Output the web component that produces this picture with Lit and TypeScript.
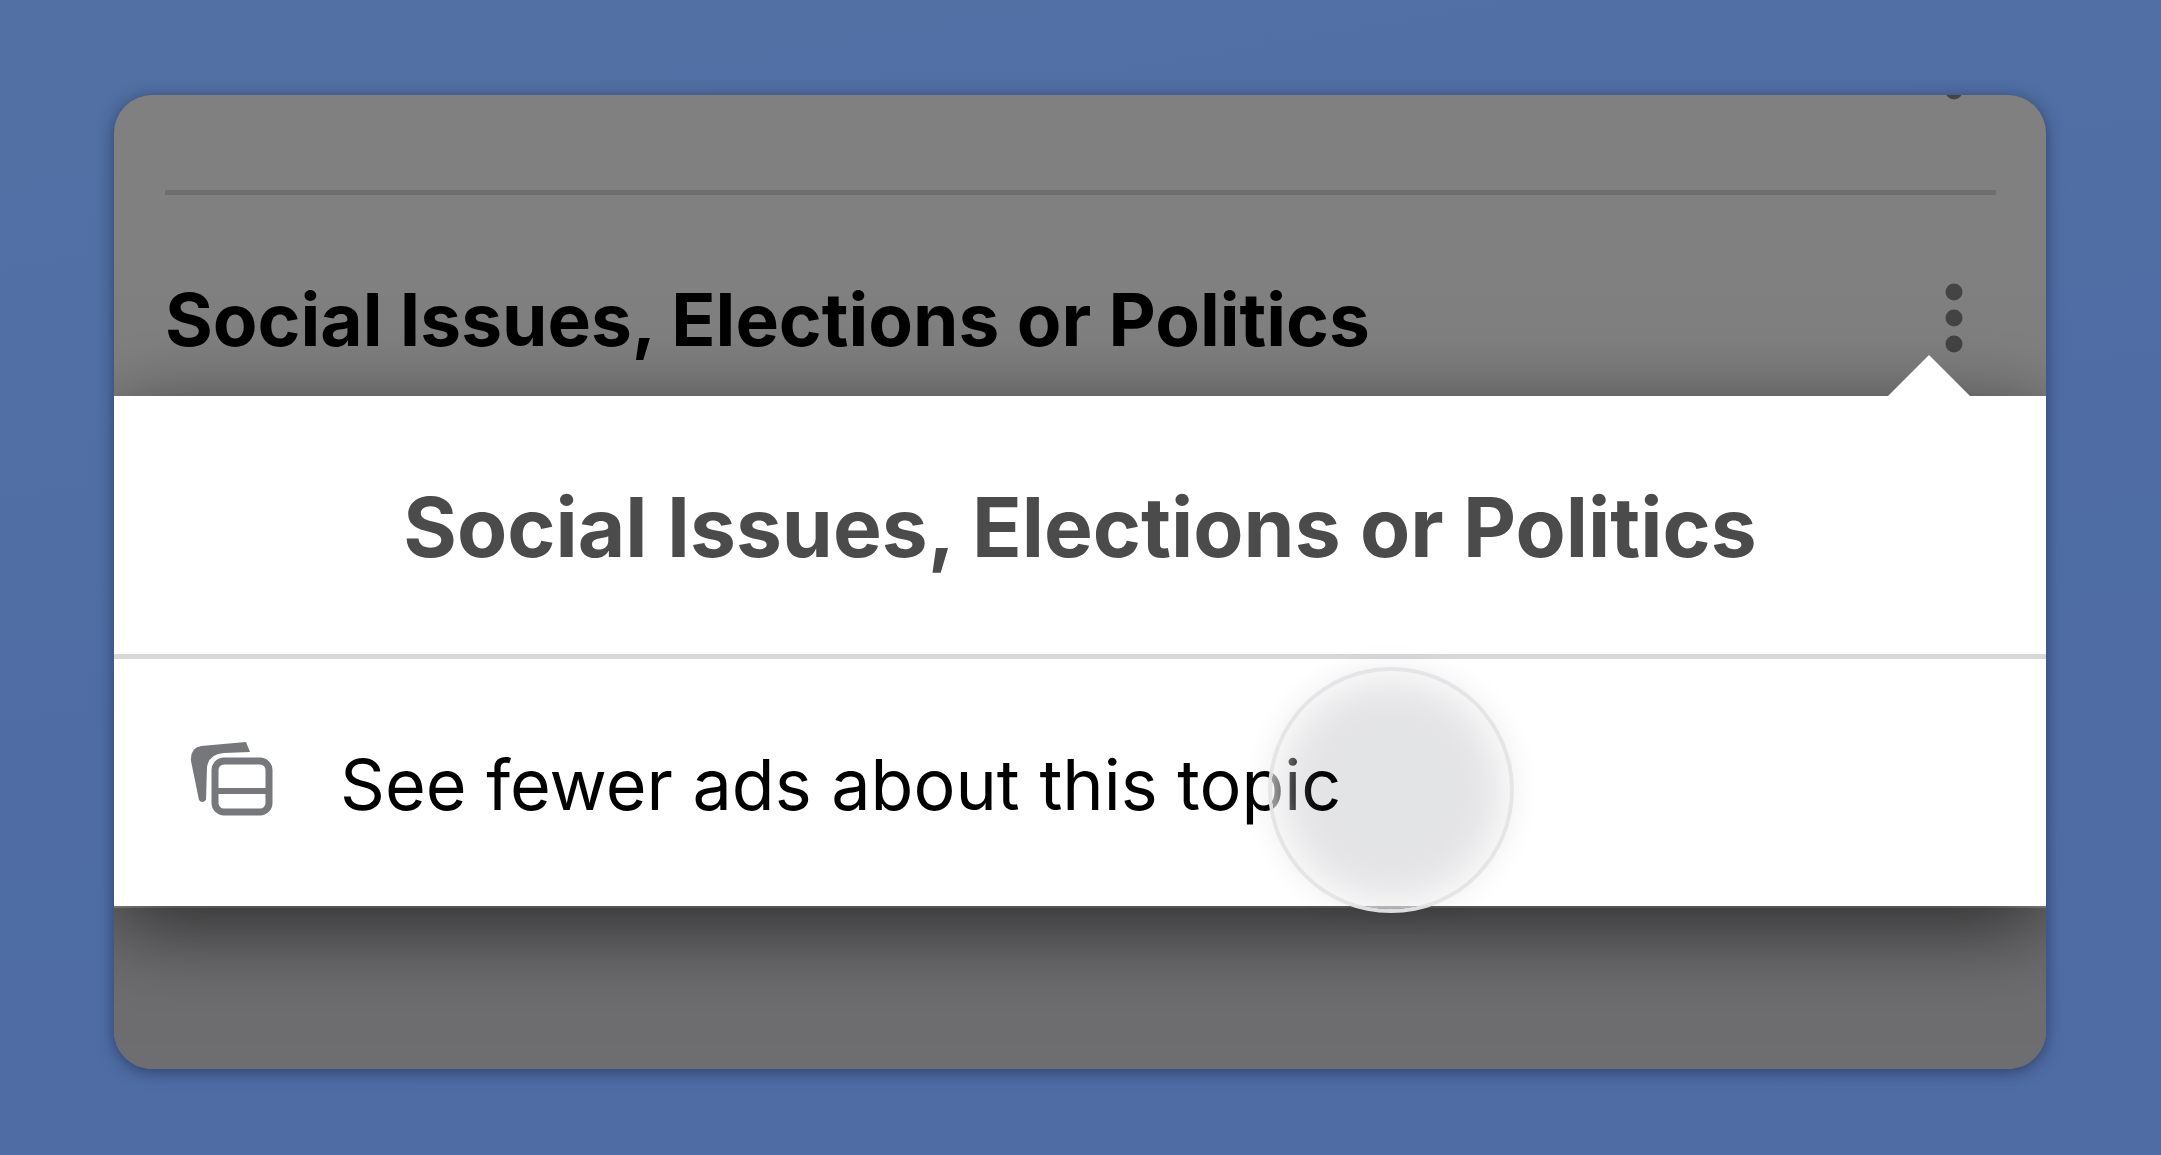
import { LitElement, html, css, svg } from "lit";
import { customElement, property } from "lit/decorators.js";

const dots = svg`
  <circle cx="9" cy="9" r="8.5"></circle>
  <circle cx="9" cy="35" r="8.5"></circle>
  <circle cx="9" cy="61" r="8.5"></circle>`;

@customElement("topic-row")
class TopicRow extends LitElement {
  @property() label = "";

  static styles = css`
    :host {
      display: flex;
      align-items: center;
      justify-content: space-between;
    }
    .title {
      margin: 0;
      padding-top: 4px;
      font-size: 73px;
      line-height: 84px;
      font-weight: 700;
      color: #000;
    }
    .more {
      display: block;
      padding: 0;
      border: 0;
      background: none;
      cursor: pointer;
    }
    .icon {
      display: block;
      width: 18px;
      height: 70px;
      fill: #444;
    }
  `;

  render() {
    return html`
      <h2 class="title">${this.label}</h2>
      <button class="more" type="button" aria-label="More options">
        <svg class="icon" viewBox="0 0 18 70" aria-hidden="true">${dots}</svg>
      </button>
    `;
  }
}

@customElement("topic-menu")
class TopicMenu extends LitElement {
  @property() label = "";

  static styles = css`
    :host {
      display: block;
      position: relative;
      z-index: 1;
      background: #fff;
      box-shadow: 0 20px 80px rgba(0, 0, 0, 0.62);
    }
    .arrow {
      position: absolute;
      right: 76px;
      bottom: 100%;
      width: 82px;
      height: 41px;
      background: #fff;
      clip-path: polygon(50% 0, 100% 100%, 0 100%);
    }
    .title {
      margin: 0;
      padding: 84px 0 78px;
      border-bottom: 5px solid #d8d8d8;
      text-align: center;
      font-size: 82px;
      line-height: 96px;
      font-weight: 700;
      color: #4b4b4b;
    }
    .item {
      display: flex;
      align-items: flex-start;
      gap: 66px;
      width: 100%;
      padding: 80px 76px 79px;
      border: 0;
      background: none;
      font: inherit;
      font-size: 70px;
      line-height: 84px;
      color: #000;
      text-align: left;
      cursor: pointer;
    }
    .icon {
      flex: none;
      width: 84px;
      height: 78px;
    }
    .label {
      position: relative;
      padding-top: 4px;
    }
    .touch {
      position: absolute;
      top: 50%;
      left: 100%;
      width: 246px;
      height: 246px;
      margin: -116px 0 0 -73px;
      box-sizing: border-box;
      border: 4px solid rgba(228, 228, 230, 0.96);
      border-radius: 50%;
      background: rgba(0, 8, 30, 0.11);
      background-clip: padding-box;
      box-shadow:
        inset 0 0 44px 5px #fff,
        0 0 30px rgba(0, 0, 0, 0.07);
      pointer-events: none;
    }
  `;

  render() {
    return html`
      <span class="arrow"></span>
      <h3 class="title">${this.label}</h3>
      <button class="item" type="button">
        <svg class="icon" viewBox="0 0 84 78" aria-hidden="true">
          <path
            fill="#76777a"
            d="M56 3 L60 13 L34 14 Q19 15 17 28 L16 61 Q12 65 9 61 L1 22 Q0 9 11 7 Z"
          ></path>
          <rect x="25" y="22" width="54" height="51" rx="9" fill="#fff" stroke="#77787b" stroke-width="7"></rect>
          <path d="M25 52 H79" stroke="#77787b" stroke-width="6"></path>
        </svg>
        <span class="label">See fewer ads about this topic<span class="touch"></span></span>
      </button>
    `;
  }
}

@customElement("app-root")
class AppRoot extends LitElement {
  static styles = css`
    :host {
      display: flex;
      flex-direction: column;
      box-sizing: border-box;
      min-height: 100vh;
      padding: 95px 115px 86px 114px;
      background: linear-gradient(170deg, #5270a3, #4f6da5 60%, #4f6ca5);
      font-family: Inter, "Liberation Sans", sans-serif;
    }
    .card {
      flex: 1;
      display: flex;
      flex-direction: column;
      overflow: hidden;
      border-radius: 38px;
      background: #808080;
      box-shadow: 0 3px 16px rgba(25, 35, 65, 0.6);
    }
    .list {
      padding: 0 50px 0 51px;
    }
    .previous {
      display: flex;
      justify-content: flex-end;
      align-items: flex-start;
      height: 95px;
      padding-right: 33px;
    }
    .previous-dots {
      display: block;
      width: 18px;
      height: 5px;
      fill: #444;
    }
    .divider {
      height: 5px;
      margin: 0;
      border: 0;
      background: #6e6e6e;
    }
    .current {
      padding: 79px 33px 34px 0;
    }
    .rest {
      flex: 1;
      min-height: 100px;
      border-top: 2px solid #929292;
      background: #6e6e70;
    }
  `;

  render() {
    const topic = "Social Issues, Elections or Politics";
    return html`
      <main class="card">
        <section class="list">
          <div class="previous">
            <svg class="previous-dots" viewBox="0 65 18 5" aria-hidden="true">${dots}</svg>
          </div>
          <hr class="divider" />
          <topic-row class="current" .label=${topic}></topic-row>
        </section>
        <topic-menu .label=${topic}></topic-menu>
        <div class="rest"></div>
      </main>
    `;
  }
}
